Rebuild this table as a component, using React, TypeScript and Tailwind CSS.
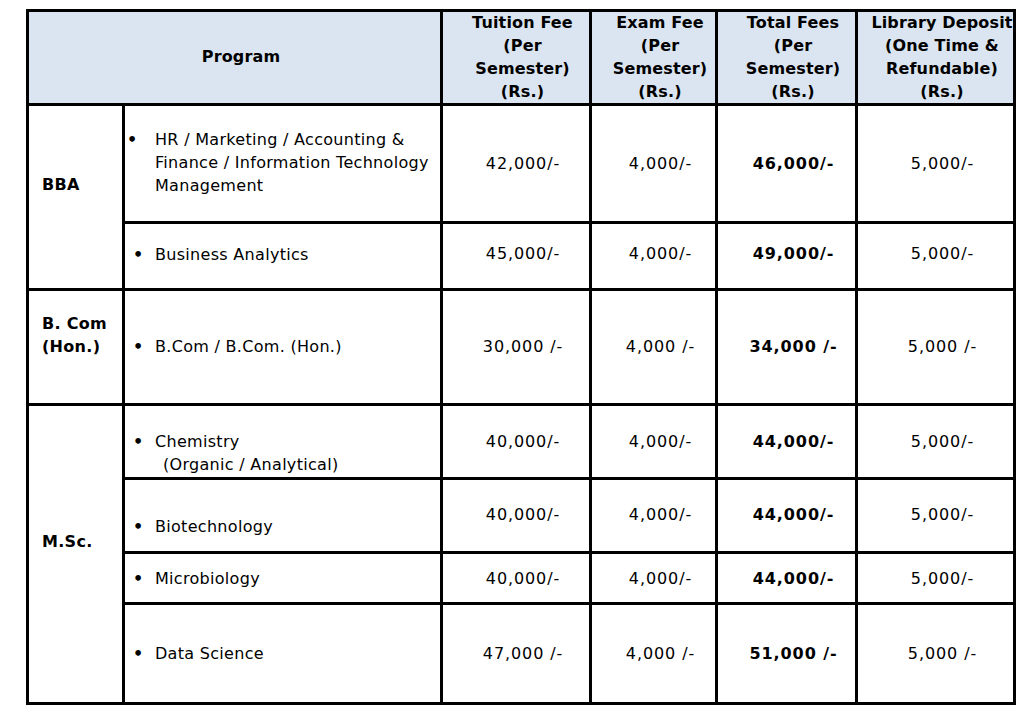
import React from "react";

const cellBase = "bg-white flex items-center";

function Num({ children, bold = false, className = "" }: { children: React.ReactNode; bold?: boolean; className?: string }) {
  return (
    <div className={`${cellBase} justify-center pl-[14px] whitespace-nowrap tracking-[0.9px] ${bold ? "font-bold" : ""} ${className}`}>
      {children}
    </div>
  );
}

function Head({ lines }: { lines: string[] }) {
  return (
    <div className="bg-[#dbe5f1] flex items-center justify-center pl-[13px] pb-[2px] font-bold text-center whitespace-nowrap tracking-[0.15px]">
      <div>
        {lines.map((l, i) => (
          <div key={i}>{l}</div>
        ))}
      </div>
    </div>
  );
}

function Prog({
  lines,
  bulletLeft = 12,
  className = "",
}: {
  lines: React.ReactNode[];
  bulletLeft?: number;
  className?: string;
}) {
  return (
    <div className={`${cellBase} whitespace-nowrap ${className}`}>
      <div className="flex">
        <span
          className={bulletLeft === 5 ? "pl-[2px] w-[30px] font-bold" : "pl-[8px] w-[30px] font-bold"}
        >
          •
        </span>
        <div className="tracking-[0.3px]">
          {lines.map((l, i) => (
            <div key={i}>{l}</div>
          ))}
        </div>
      </div>
    </div>
  );
}

function Label({ lines, className = "" }: { lines: string[]; className?: string }) {
  return (
    <div className={`bg-white flex items-center pl-[13px] pb-[25px] font-bold whitespace-nowrap tracking-[0.3px] ${className}`}>
      <div>
        {lines.map((l, i) => (
          <div key={i}>{l}</div>
        ))}
      </div>
    </div>
  );
}

export default function App() {
  return (
    <div className="bg-white w-[1034px] h-[709px] pt-[9px] pl-[26px] font-['DejaVu_Sans',Verdana,sans-serif] text-[16px] leading-[23px] text-black">
      <div className="grid w-[990px] bg-black p-[3px] gap-[3px] grid-cols-[93px_315px_146px_123px_137px_155px] grid-rows-[91px_115px_64px_112px_71px_71px_48px_97px]">
        {/* header */}
        <div className="col-span-2 bg-[#dbe5f1] flex items-center justify-center pl-[13px] pb-[2px] font-bold tracking-[0.15px]">
          Program
        </div>
        <Head lines={["Tuition Fee", "(Per", "Semester)", "(Rs.)"]} />
        <Head lines={["Exam Fee", "(Per", "Semester)", "(Rs.)"]} />
        <Head lines={["Total Fees", "(Per", "Semester)", "(Rs.)"]} />
        <Head lines={["Library Deposit", "(One Time &", "Refundable)", "(Rs.)"]} />

        {/* BBA */}
        <Label lines={["BBA"]} className="row-span-2" />
        <Prog
          bulletLeft={5}
          lines={["HR / Marketing / Accounting &", "Finance / Information Technology", "Management"]}
          className="pb-[2px]"
        />
        <Num>42,000/-</Num>
        <Num>4,000/-</Num>
        <Num bold>46,000/-</Num>
        <Num>5,000/-</Num>

        <Prog lines={["Business Analytics"]} className="pb-[4px]" />
        <Num className="pb-[6px]">45,000/-</Num>
        <Num className="pb-[6px]">4,000/-</Num>
        <Num bold className="pb-[6px]">49,000/-</Num>
        <Num className="pb-[6px]">5,000/-</Num>

        {/* B.Com */}
        <Label lines={["B. Com", "(Hon.)"]} />
        <Prog lines={["B.Com / B.Com. (Hon.)"]} className="pb-[2px]" />
        <Num className="pb-[2px]">30,000 /-</Num>
        <Num className="pb-[2px]">4,000 /-</Num>
        <Num bold className="pb-[2px]">34,000 /-</Num>
        <Num className="pb-[2px]">5,000 /-</Num>

        {/* M.Sc. */}
        <Label lines={["M.Sc."]} className="row-span-4" />
        <Prog
          lines={["Chemistry", <span className="pl-[8px]">(Organic / Analytical)</span>]}
          className="pt-[23px]"
        />
        <Num>40,000/-</Num>
        <Num>4,000/-</Num>
        <Num bold>44,000/-</Num>
        <Num>5,000/-</Num>

        <Prog lines={["Biotechnology"]} className="pt-[21px]" />
        <Num className="pb-[2px]">40,000/-</Num>
        <Num className="pb-[2px]">4,000/-</Num>
        <Num bold className="pb-[2px]">44,000/-</Num>
        <Num className="pb-[2px]">5,000/-</Num>

        <Prog lines={["Microbiology"]} />
        <Num>40,000/-</Num>
        <Num>4,000/-</Num>
        <Num bold>44,000/-</Num>
        <Num>5,000/-</Num>

        <Prog lines={["Data Science"]} />
        <Num>47,000 /-</Num>
        <Num>4,000 /-</Num>
        <Num bold>51,000 /-</Num>
        <Num>5,000 /-</Num>
      </div>
    </div>
  );
}
